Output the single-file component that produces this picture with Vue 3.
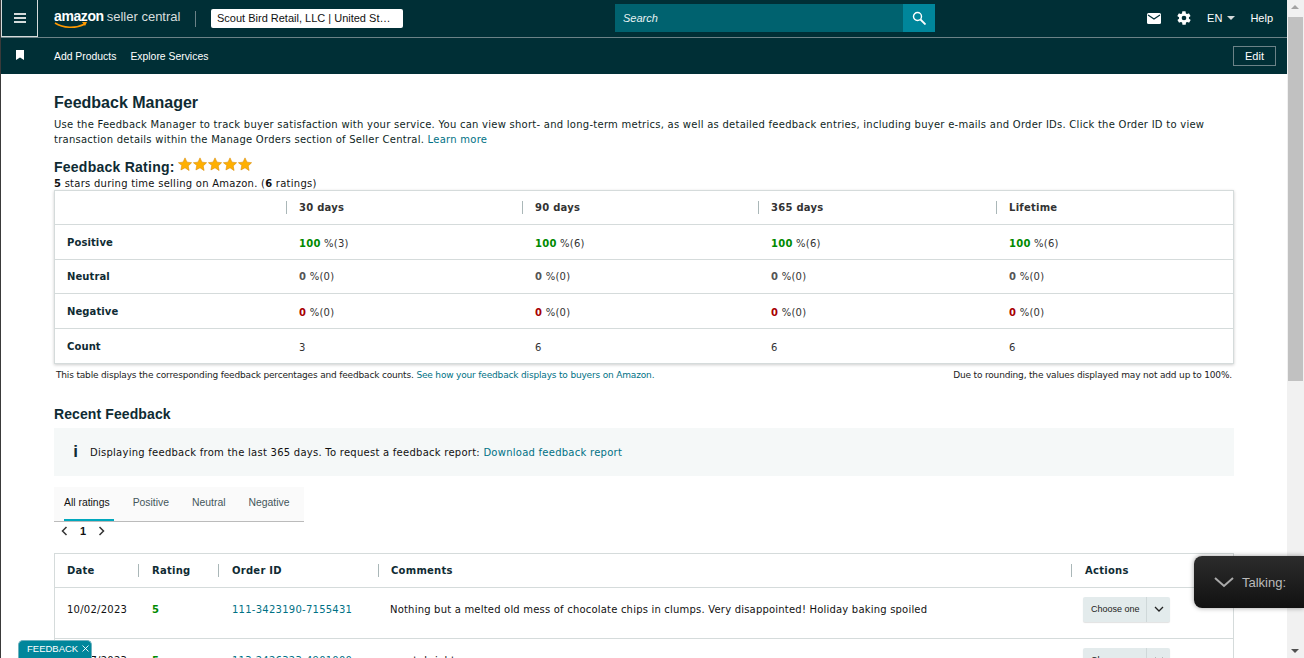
<template>
  <div class="window">
    <div class="page">
      <header class="topbar">
        <button class="menu-btn"><span></span><span></span><span></span></button>
        <div class="logo">
          <span class="logo-amazon">amazon</span><span class="logo-seller">seller central</span>
          <svg class="smile" width="34" height="8" viewBox="0 0 34 8"><path d="M1 1c8 5 20 6 30 1" fill="none" stroke="#f90" stroke-width="1.6"/><path d="M28 0l5 0-2 4z" fill="#f90"/></svg>
        </div>
        <div class="divider"></div>
        <div class="account">Scout Bird Retail, LLC | United St…</div>
        <div class="search">
          <span class="search-input">Search</span>
          <span class="search-btn">
            <svg width="14" height="14" viewBox="0 0 14 14"><circle cx="5.500" cy="5.500" r="4" fill="none" stroke="#fff" stroke-width="1.400"/><path d="M8.500 8.500l5 5" stroke="#fff" stroke-width="1.800"/></svg>
          </span>
        </div>
        <div class="top-right">
          <svg width="14" height="11" viewBox="0 0 14 11"><rect width="14" height="11" rx="1.500" fill="#fff"/><path d="M1 2l6 4 6-4" fill="none" stroke="#002f36" stroke-width="1.200"/></svg>
          <svg class="gear" width="16" height="16" viewBox="0 0 24 24"><path fill="#fff" d="M19.400 13a7.500 7.500 0 0 0 0-2l2.100-1.600a.5.5 0 0 0 .1-.7l-2-3.400a.5.5 0 0 0-.6-.2l-2.500 1a7.300 7.300 0 0 0-1.700-1l-.4-2.700a.5.5 0 0 0-.5-.4h-4a.5.5 0 0 0-.5.4l-.4 2.700a7.300 7.300 0 0 0-1.700 1l-2.500-1a.5.5 0 0 0-.6.2l-2 3.400a.5.5 0 0 0 .1.700L4.600 11a7.500 7.500 0 0 0 0 2l-2.100 1.600a.5.5 0 0 0-.1.700l2 3.400a.5.5 0 0 0 .6.2l2.500-1c.5.4 1.100.7 1.700 1l.4 2.700a.5.5 0 0 0 .5.400h4a.5.5 0 0 0 .5-.400l.4-2.700c.6-.3 1.200-.6 1.700-1l2.500 1a.5.5 0 0 0 .6-.2l2-3.400a.5.5 0 0 0-.1-.700zM12 15.500a3.500 3.500 0 1 1 0-7 3.500 3.500 0 0 1 0 7z"/></svg>
          <span class="lang">EN<i class="caret"></i></span>
          <span class="help">Help</span>
        </div>
      </header>
      <nav class="navbar">
        <svg class="bookmark" width="8" height="10" viewBox="0 0 8 10"><path d="M0 0h8v10L4 7.500 0 10z" fill="#fff"/></svg>
        <a>Add Products</a>
        <a>Explore Services</a>
        <button class="edit-btn">Edit</button>
      </nav>

      <main class="content">
        <h1>Feedback Manager</h1>
        <p class="intro">Use the Feedback Manager to track buyer satisfaction with your service. You can view short- and long-term metrics, as well as detailed feedback entries, including buyer e-mails and Order IDs. Click the Order ID to view transaction details within the Manage Orders section of Seller Central. <a>Learn more</a></p>

        <div class="rating-head">
          <h2>Feedback Rating:</h2>
          <div class="stars">
            <svg v-for="n in 5" :key="n" width="14" height="14" viewBox="0 0 24 23"><path d="M12 1l3.400 7.300 7.900 1-5.800 5.500 1.500 7.900L12 18l-7 3.700 1.500-7.900L.7 9.300l7.900-1z" fill="#ffb000" stroke="#d98a00" stroke-width="1"/></svg>
          </div>
        </div>
        <p class="rating-sub"><b>5</b> stars during time selling on Amazon. (<b>6</b> ratings)</p>

        <section class="metrics">
          <div class="m-row m-head">
            <div></div>
            <div v-for="p in periods" :key="p" class="m-cell sep"><b>{{ p }}</b></div>
          </div>
          <div v-for="row in metrics" :key="row.label" class="m-row">
            <div class="m-label">{{ row.label }}</div>
            <div v-for="(v, i) in row.values" :key="i" class="m-cell">
              <template v-if="row.color"><b :style="{ color: row.color }">{{ v[0] }}</b> %({{ v[1] }})</template>
              <template v-else>{{ v }}</template>
            </div>
          </div>
        </section>
        <div class="table-notes">
          <span>This table displays the corresponding feedback percentages and feedback counts. <a>See how your feedback displays to buyers on Amazon.</a></span>
          <span>Due to rounding, the values displayed may not add up to 100%.</span>
        </div>

        <h2 class="recent-title">Recent Feedback</h2>
        <div class="info-box">
          <span class="info-i">i</span>
          <span>Displaying feedback from the last 365 days. To request a feedback report: <a>Download feedback report</a></span>
        </div>

        <div class="tabs">
          <span v-for="(t, i) in tabs" :key="t" class="tab" :class="{ active: i === 0 }">{{ t }}</span>
        </div>
        <div class="pager">
          <svg width="7" height="10" viewBox="0 0 7 10"><path d="M5.500 1L1.500 5l4 4" fill="none" stroke="#333" stroke-width="1.500"/></svg>
          <span>1</span>
          <svg width="7" height="10" viewBox="0 0 7 10"><path d="M1.500 1l4 4-4 4" fill="none" stroke="#333" stroke-width="1.500"/></svg>
        </div>

        <section class="feed">
          <div class="f-row f-head">
            <div><b>Date</b></div>
            <div class="sep"><b>Rating</b></div>
            <div class="sep"><b>Order ID</b></div>
            <div class="sep"><b>Comments</b></div>
            <div class="sep"><b>Actions</b></div>
          </div>
          <div v-for="row in feedback" :key="row.order" class="f-row f-body">
            <div>{{ row.date }}</div>
            <div class="f-rate"><b>{{ row.rating }}</b></div>
            <div><a>{{ row.order }}</a></div>
            <div class="f-comment">{{ row.comment }}</div>
            <div>
              <div class="choose">
                <span>Choose one</span>
                <span class="choose-arrow">
                  <svg width="10" height="6" viewBox="0 0 10 6"><path d="M1 1l4 4 4-4" fill="none" stroke="#222" stroke-width="1.300"/></svg>
                </span>
              </div>
            </div>
          </div>
        </section>
      </main>

      <div class="feedback-tab">
        FEEDBACK
        <svg width="7" height="7" viewBox="0 0 7 7"><path d="M.5.5l6 6M6.500.5l-6 6" stroke="#fff" stroke-width="0.900"/></svg>
      </div>
    </div>

    <div class="scrollbar">
      <i class="arrow up"></i>
      <div class="thumb"></div>
      <i class="arrow down"></i>
    </div>

    <div class="talking">
      <svg width="20" height="11" viewBox="0 0 20 11"><path d="M1 1l9 8 9-8" fill="none" stroke="#aaa" stroke-width="2"/></svg>
      <span>Talking:</span>
    </div>
  </div>
</template>

<script setup>
const periods = ['30 days', '90 days', '365 days', 'Lifetime']

const metrics = [
  { label: 'Positive', color: '#008a00', values: [['100', 3], ['100', 6], ['100', 6], ['100', 6]] },
  { label: 'Neutral', color: '#555', values: [['0', 0], ['0', 0], ['0', 0], ['0', 0]] },
  { label: 'Negative', color: '#a80000', values: [['0', 0], ['0', 0], ['0', 0], ['0', 0]] },
  { label: 'Count', values: [3, 6, 6, 6] }
]

const tabs = ['All ratings', 'Positive', 'Neutral', 'Negative']

const feedback = [
  { date: '10/02/2023', rating: 5, order: '111-3423190-7155431', comment: 'Nothing but a melted old mess of chocolate chips in clumps. Very disappointed! Holiday baking spoiled' },
  { date: '09/27/2023', rating: 5, order: '113-2426323-4901000', comment: 'great, bright' }
]
</script>

<style>
html, body { margin: 0; height: 100%; overflow: hidden; background: #fff; }
</style>

<style scoped>
.window { position: relative; display: flex; width: 1304px; height: 658px; overflow: hidden; font-family: "DejaVu Sans", Verdana, sans-serif; font-size: 10px; color: #111; }
.page { position: relative; flex: 1; min-width: 0; height: 658px; overflow: hidden; border-left: 1px solid #3a3a3a; box-sizing: border-box; }
a { color: #007185; }
b { font-weight: 700; }

.topbar { display: flex; align-items: center; height: 38px; box-sizing: border-box; background: #002f36; border-bottom: 1px solid #6b8287; font-family: "Liberation Sans", Arial, sans-serif; color: #fff; }
.menu-btn { display: flex; flex-direction: column; justify-content: center; align-items: center; gap: 2px; width: 37px; height: 37px; padding: 0; background: none; border: 1px solid #d5dbdb; border-top: 0; box-sizing: border-box; }
.menu-btn span { width: 12px; height: 2px; background: #d5dbdb; }
.logo { position: relative; display: flex; align-items: baseline; margin-left: 16px; width: 127px; margin-top: -5px; white-space: nowrap; }
.logo-amazon { font-size: 14px; font-weight: 700; letter-spacing: -0.4px; }
.logo-seller { margin-left: 3px; font-size: 13px; color: #d8dede; }
.smile { position: absolute; left: 0; top: 14px; }
.divider { width: 1px; height: 16px; margin-left: 14px; background: #6b8287; }
.account { width: 192px; height: 19px; margin-left: 15px; padding-left: 6px; box-sizing: border-box; line-height: 19px; font-size: 11px; color: #111; background: #fff; border-radius: 2px; }
.search { display: flex; width: 320px; height: 28px; margin-left: 212px; margin-top: -1px; }
.search-input { flex: 1; padding-left: 8px; line-height: 28px; font-size: 11px; font-style: italic; color: #e8f2f3; background: #00626f; }
.search-btn { display: flex; align-items: center; justify-content: center; width: 32px; background: #00869b; }
.top-right { display: flex; align-items: center; margin-left: auto; margin-top: -1px; padding-right: 14px; }
.gear { margin-left: 15px; }
.lang { display: flex; align-items: center; margin-left: 15px; font-size: 11px; }
.caret { width: 0; height: 0; margin-left: 5px; border: 4px solid transparent; border-top-color: #d5dbdb; border-bottom-width: 0; }
.help { margin-left: 15px; font-size: 11px; }

.navbar { display: flex; align-items: center; height: 36px; background: #002f36; color: #fff; font-family: "Liberation Sans", Arial, sans-serif; font-size: 10.400px; }
.navbar a { color: #fff; margin: 1px 14px 0 0; }
.bookmark { margin-left: 15px; margin-right: 30px; margin-top: -3px; }
.edit-btn { margin-left: auto; margin-right: 11px; width: 43px; height: 20px; padding: 0; font: 11px "Liberation Sans", Arial, sans-serif; color: #fff; background: none; border: 1px solid #6b8287; }

.content { padding: 20px 0 0 53px; width: 1180px; letter-spacing: 0.255px; }
h1 { margin: 0; font: 700 16px/18px "Liberation Sans", Arial, sans-serif; letter-spacing: 0; color: #0f2b33; }
.intro { margin: 5px 0 0; line-height: 15px; color: #0f1f24; }
.rating-head { display: flex; align-items: flex-start; margin-top: 10px; height: 18px; }
.rating-head h2 { margin: 2px 3px 0 0; font: 700 14px/16px "Liberation Sans", Arial, sans-serif; letter-spacing: 0.25px; color: #0f2b33; }
.stars { display: flex; gap: 1px; }
.rating-sub { margin: 3px 0 0; line-height: 12px; }

.metrics { border: 1px solid #d5dbdb; box-shadow: 0 1px 3px rgba(0, 0, 0, 0.2); }
.m-row { display: grid; grid-template-columns: 231px 236px 236px 238px 1fr; align-items: center; height: 35px; border-top: 1px solid #d5dbdb; box-sizing: border-box; }
.m-row:first-child { border-top: 0; height: 33px; }
.m-row:nth-child(3) { height: 34px; }
.m-label { padding: 1px 0 0 12px; font-weight: 700; color: #0f2b33; letter-spacing: 0.1px; }
.m-cell { padding: 2px 0 0 13px; color: #333; }
.m-head .m-cell { padding-top: 0; }
.m-row:nth-child(3) .m-cell, .m-row:nth-child(3) .m-label { padding-top: 0; }
.sep { position: relative; }
.sep::before { content: ''; position: absolute; left: 0; top: 50%; height: 13px; margin-top: -7px; width: 1px; background: #aab7b8; }

.table-notes { display: flex; justify-content: space-between; margin-top: 5px; padding: 0 2px; font-size: 9px; line-height: 12px; letter-spacing: -0.17px; color: #222; }
.recent-title { margin: 24px 0 0; font: 700 14px/18px "Liberation Sans", Arial, sans-serif; letter-spacing: 0.1px; color: #0f2b33; }
.info-box { display: flex; align-items: center; height: 48px; margin-top: 5px; background: #f5f8f8; }
.info-i { width: 36px; padding-right: 12px; margin-left: -12px; text-align: right; font: 700 17px "Liberation Sans", Arial, sans-serif; letter-spacing: 0; color: #0f2b33; }
.tabs { display: flex; align-items: flex-end; width: 250px; height: 34px; margin-top: 11px; background: #fafafa; border-bottom: 1px solid #bbb; font-family: "Liberation Sans", Arial, sans-serif; font-size: 10.400px; letter-spacing: 0; color: #44565a; }
.tab { height: 14px; margin-left: 23px; padding-bottom: 8px; border-bottom: 2px solid transparent; }
.tab:first-child { margin-left: 10px; }
.tab.active { color: #111; border-bottom-color: #00a8bd; padding-right: 4px; }
.tab.active + .tab { margin-left: 19px; }
.pager { display: flex; align-items: center; gap: 12px; height: 18px; padding-left: 7px; font: 700 11px "Liberation Sans", Arial, sans-serif; letter-spacing: 0; }
.feed { margin-top: 13px; border: 1px solid #d5dbdb; border-bottom: 0; }
.f-row { display: grid; grid-template-columns: 83px 80px 160px 693px 1fr; align-items: center; }
.f-head { height: 33px; }
.f-head > div { padding-left: 14px; color: #0f2b33; }
.f-head > div:first-child { padding-left: 12px; }
.f-head > div:nth-child(4) { padding-left: 13px; }
.f-body { height: 51px; padding-bottom: 8px; border-top: 1px solid #d5dbdb; box-sizing: border-box; }
.f-body > div { padding-left: 14px; }
.f-body > div:first-child { padding-left: 12px; }
.f-body > div.f-comment { padding-left: 12px; letter-spacing: 0.2px; }
.f-body > div:last-child { padding-left: 12px; }
.f-rate { color: #008a00; }
.choose { display: flex; width: 87px; height: 25px; background: #e3ebec; border-radius: 2px; box-shadow: 0 1px 1px rgba(0, 0, 0, 0.12); font: 9px/24px "Liberation Sans", Arial, sans-serif; letter-spacing: 0; color: #222; }
.choose > span:first-child { flex: 1; padding-left: 8px; }
.choose-arrow { display: flex; align-items: center; justify-content: center; width: 23px; border-left: 1px solid #cfd8d9; }

.feedback-tab { position: absolute; left: 17px; top: 640px; display: flex; align-items: center; gap: 4px; width: 74px; height: 18px; padding: 0 0 2px 8px; box-sizing: border-box; border-radius: 5px 5px 0 0; background: #00869b; border: 1px solid #6fb3bf; border-bottom: 0; font: 9.500px/16px "Liberation Sans", Arial, sans-serif; color: #fff; white-space: nowrap; }

.scrollbar { position: relative; flex: none; width: 17px; height: 658px; background: #f1f1f1; }
.thumb { position: absolute; top: 17px; left: 1px; width: 15px; height: 364px; background: #c1c1c1; }
.arrow { position: absolute; left: 4px; width: 0; height: 0; border: 4px solid transparent; }
.arrow.up { top: 5px; border-top-width: 0; border-bottom-color: #a3a3a3; }
.arrow.down { bottom: 5px; border-bottom-width: 0; border-top-color: #505050; }

.talking { position: absolute; left: 1194px; top: 556px; display: flex; align-items: center; gap: 8px; width: 110px; height: 52px; padding-left: 20px; box-sizing: border-box; background: linear-gradient(#2c2c2c, #111); border-radius: 8px 0 0 8px; box-shadow: 0 0 5px rgba(0, 0, 0, 0.4); font: 13px "Liberation Sans", Arial, sans-serif; color: #bbb; }
</style>
